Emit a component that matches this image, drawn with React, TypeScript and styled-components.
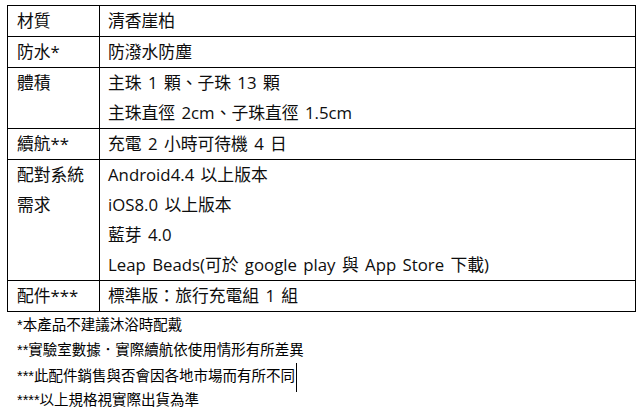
import styled, { createGlobalStyle } from "styled-components"

const GlobalStyle = createGlobalStyle`
  html, body {
    margin: 0;
    padding: 0;
    background: #ffffff;
  }
`

const Page = styled.div`
  padding: 5px 0 0 7px;
  width: 642px;
  height: 415px;
  box-sizing: border-box;
  overflow: hidden;
`

const SpecTable = styled.table`
  border-collapse: collapse;
  width: 629px;
  font-family: "Open Sans", "Noto Sans CJK TC", sans-serif;
  font-size: 16.8px;
  word-spacing: 2px;
  color: #0d0d0d;
`

const Cell = styled.td<{ $label?: boolean }>`
  border: 1px solid #000000;
  padding: 0 0 0 ${(p) => (p.$label ? "9px" : "8px")};
  width: ${(p) => (p.$label ? "82px" : "auto")};
  vertical-align: top;
  text-align: left;
`

const Line = styled.div`
  height: 30px;
  line-height: 30px;
  white-space: nowrap;
`

const Notes = styled.div`
  margin-top: 1px;
  padding-left: 10px;
  font-family: "Liberation Sans", "Noto Sans CJK TC", sans-serif;
  font-size: 14.5px;
  color: #000000;
`

const Note = styled.div`
  height: 25px;
  line-height: 25px;
  white-space: nowrap;
`

const Caret = styled.span`
  display: inline-block;
  width: 1px;
  height: 29px;
  background: #000000;
  vertical-align: middle;
  margin-left: 1px;
`

interface ISpec {
  label: string[]
  value: string[]
}

const SPECS: ISpec[] = [
  { label: ["材質"], value: ["清香崖柏"] },
  { label: ["防水*"], value: ["防潑水防塵"] },
  { label: ["體積"], value: ["主珠 1 顆、子珠 13 顆", "主珠直徑 2cm、子珠直徑 1.5cm"] },
  { label: ["續航**"], value: ["充電 2 小時可待機 4 日"] },
  {
    label: ["配對系統", "需求"],
    value: [
      "Android4.4 以上版本",
      "iOS8.0 以上版本",
      "藍芽 4.0",
      "Leap Beads(可於 google play 與 App Store 下載)"
    ]
  },
  { label: ["配件***"], value: ["標準版：旅行充電組 1 組"] }
]

const App = () => {
  return (
    <Page>
      <GlobalStyle />
      <SpecTable>
        <tbody>
          {SPECS.map((s, index) => (
            <tr key={index}>
              <Cell $label>
                {s.label.map((l, i) => (
                  <Line key={i}>{l}</Line>
                ))}
              </Cell>
              <Cell>
                {s.value.map((v, i) => (
                  <Line key={i}>{v}</Line>
                ))}
              </Cell>
            </tr>
          ))}
        </tbody>
      </SpecTable>
      <Notes>
        <Note>*本產品不建議沐浴時配戴</Note>
        <Note>**實驗室數據．實際續航依使用情形有所差異</Note>
        <Note>
          ***此配件銷售與否會因各地市場而有所不同
          <Caret />
        </Note>
        <Note>****以上規格視實際出貨為準</Note>
      </Notes>
    </Page>
  )
}

export default App
